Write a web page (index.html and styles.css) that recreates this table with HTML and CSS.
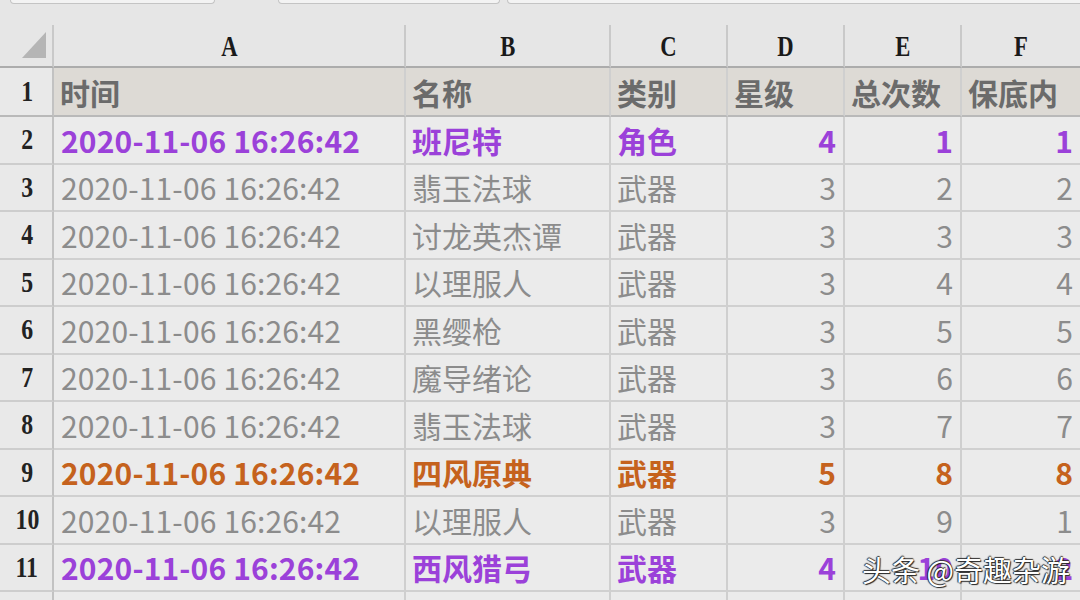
FILE: index.html
```html
<!DOCTYPE html>
<html lang="zh">
<head>
<meta charset="utf-8">
<title>Sheet</title>
<link rel="stylesheet" href="styles.css">
</head>
<body>
<div class="page">
  <div class="topbar">
    <div class="box box1"></div>
    <div class="box box2"></div>
    <div class="box box3"></div>
  </div>
  <div class="sheet">
    <div class="ch corner"><span class="tri"></span></div>
    <div class="ch"><span class="lt">A</span></div>
    <div class="ch"><span class="lt">B</span></div>
    <div class="ch"><span class="lt">C</span></div>
    <div class="ch"><span class="lt">D</span></div>
    <div class="ch"><span class="lt">E</span></div>
    <div class="ch last"><span class="lt">F</span></div>

    <div class="rh rh1"><span class="rn">1</span></div>
    <div class="c hd">时间</div>
    <div class="c hd">名称</div>
    <div class="c hd">类别</div>
    <div class="c hd">星级</div>
    <div class="c hd">总次数</div>
    <div class="c hd last">保底内</div>

    <div class="rh"><span class="rn">2</span></div>
    <div class="c p dt">2020-11-06 16:26:42</div>
    <div class="c p">班尼特</div>
    <div class="c p">角色</div>
    <div class="c p n">4</div>
    <div class="c p n">1</div>
    <div class="c p n last">1</div>

    <div class="rh"><span class="rn">3</span></div>
    <div class="c g dt">2020-11-06 16:26:42</div>
    <div class="c g">翡玉法球</div>
    <div class="c g">武器</div>
    <div class="c g n">3</div>
    <div class="c g n">2</div>
    <div class="c g n last">2</div>

    <div class="rh"><span class="rn">4</span></div>
    <div class="c g dt">2020-11-06 16:26:42</div>
    <div class="c g">讨龙英杰谭</div>
    <div class="c g">武器</div>
    <div class="c g n">3</div>
    <div class="c g n">3</div>
    <div class="c g n last">3</div>

    <div class="rh"><span class="rn">5</span></div>
    <div class="c g dt">2020-11-06 16:26:42</div>
    <div class="c g">以理服人</div>
    <div class="c g">武器</div>
    <div class="c g n">3</div>
    <div class="c g n">4</div>
    <div class="c g n last">4</div>

    <div class="rh"><span class="rn">6</span></div>
    <div class="c g dt">2020-11-06 16:26:42</div>
    <div class="c g">黑缨枪</div>
    <div class="c g">武器</div>
    <div class="c g n">3</div>
    <div class="c g n">5</div>
    <div class="c g n last">5</div>

    <div class="rh"><span class="rn">7</span></div>
    <div class="c g dt">2020-11-06 16:26:42</div>
    <div class="c g">魔导绪论</div>
    <div class="c g">武器</div>
    <div class="c g n">3</div>
    <div class="c g n">6</div>
    <div class="c g n last">6</div>

    <div class="rh"><span class="rn">8</span></div>
    <div class="c g dt">2020-11-06 16:26:42</div>
    <div class="c g">翡玉法球</div>
    <div class="c g">武器</div>
    <div class="c g n">3</div>
    <div class="c g n">7</div>
    <div class="c g n last">7</div>

    <div class="rh"><span class="rn">9</span></div>
    <div class="c o dt">2020-11-06 16:26:42</div>
    <div class="c o">四风原典</div>
    <div class="c o">武器</div>
    <div class="c o n">5</div>
    <div class="c o n">8</div>
    <div class="c o n last">8</div>

    <div class="rh"><span class="rn">10</span></div>
    <div class="c g dt">2020-11-06 16:26:42</div>
    <div class="c g">以理服人</div>
    <div class="c g">武器</div>
    <div class="c g n">3</div>
    <div class="c g n">9</div>
    <div class="c g n last">1</div>

    <div class="rh"><span class="rn">11</span></div>
    <div class="c p dt">2020-11-06 16:26:42</div>
    <div class="c p">西风猎弓</div>
    <div class="c p">武器</div>
    <div class="c p n">4</div>
    <div class="c p n">10</div>
    <div class="c p n last">2</div>

    <div class="rh"></div>
    <div class="c"></div>
    <div class="c"></div>
    <div class="c"></div>
    <div class="c"></div>
    <div class="c"></div>
    <div class="c last"></div>
  </div>
  <div class="watermark">头条 @奇趣杂游</div>
</div>
</body>
</html>
```

FILE: styles.css
```css
html, body {
  margin: 0;
  padding: 0;
  background: #e6e6e6;
}
.page {
  position: relative;
  width: 1080px;
  height: 600px;
  overflow: hidden;
  background: #e6e6e6;
  font-family: "Noto Sans CJK SC", "Noto Sans", sans-serif;
}
.topbar {
  height: 25px;
  display: flex;
  align-items: flex-start;
}
.box {
  height: 3px;
  background: #f3f3f3;
  border: 1px solid #c4c4c4;
  border-top: none;
  border-radius: 0 0 4px 4px;
}
.box1 { margin-left: 10px; width: 203px; }
.box2 { margin-left: 63px; width: 220px; }
.box3 { margin-left: 7px; flex: 1; margin-right: -10px; }

.sheet {
  display: grid;
  grid-template-columns: 54px 352px 205px 117px 117px 117px 118px;
  grid-template-rows: 43px 49px repeat(10, 47.5px) 40px;
}
.ch {
  box-sizing: border-box;
  border-right: 2px solid #c9c9c9;
  border-bottom: 2px solid #acacac;
  background: #e6e6e6;
  display: flex;
  align-items: flex-end;
  justify-content: center;
  padding-bottom: 4px;
}
.ch.last { border-right: none; }
.corner { position: relative; }
.tri {
  position: absolute;
  right: 6px;
  bottom: 8px;
  width: 0;
  height: 0;
  border-left: 24px solid transparent;
  border-bottom: 26px solid #b5b5b5;
}
.lt {
  font-family: "Liberation Serif", "DejaVu Serif", serif;
  font-weight: bold;
  font-size: 29px;
  line-height: 32px;
  color: #1a1a1a;
  display: inline-block;
  transform: scaleX(0.78);
}
.rh {
  box-sizing: border-box;
  border-right: 2px solid #c2c2c2;
  border-bottom: 2px solid #cdcdcd;
  background: #e9e9e9;
  display: flex;
  align-items: center;
  justify-content: center;
}
.rh1 { border-bottom-color: #b9b9b9; }
.rn {
  font-family: "Liberation Serif", "DejaVu Serif", serif;
  font-weight: bold;
  font-size: 29px;
  color: #222;
  display: inline-block;
  transform: scaleX(0.82);
  margin-left: 2px;
}
.c {
  box-sizing: border-box;
  border-right: 2px solid #cfcfcf;
  border-bottom: 2px solid #d0d0d0;
  background: #ebebeb;
  display: flex;
  align-items: center;
  padding: 0 7px 0 6px;
  font-size: 30px;
  white-space: nowrap;
  overflow: hidden;
}
.c.dt { padding-left: 7px; letter-spacing: 0.15px; }
.c.last { border-right: none; }
.c.hd {
  background: #dddad5;
  color: #6b6b6b;
  font-weight: bold;
  border-bottom: 2px solid #b9b9b9;
}
.c.n { justify-content: flex-end; }
.p { color: #9b41d9; font-weight: bold; }
.o { color: #c5621d; font-weight: bold; }
.g { color: #8c8c8c; }

.watermark {
  position: absolute;
  left: 862px;
  top: 548px;
  font-size: 29px;
  color: #ffffff;
  text-shadow: 1px 1px 1px #222, -1px 0 1px #222, 0 -1px 1px #333;
  letter-spacing: 0;
  white-space: nowrap;
}
```
